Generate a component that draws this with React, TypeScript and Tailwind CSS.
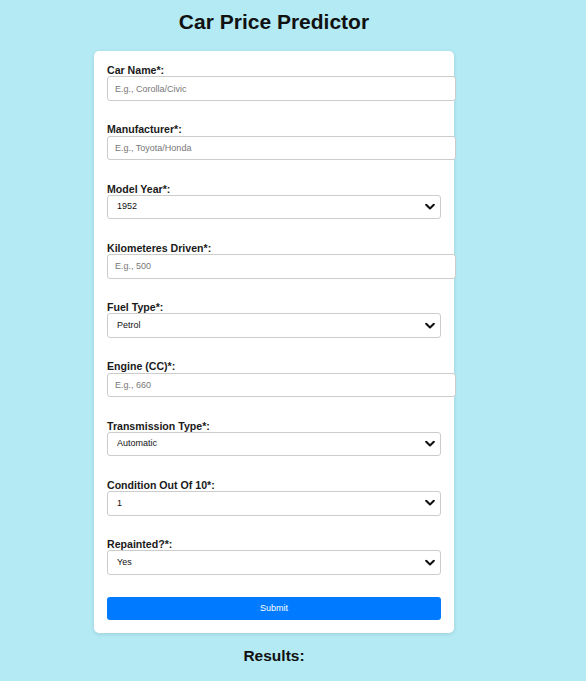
import React from "react";

const font = { fontFamily: '"Liberation Sans", Arial, sans-serif' };

function Chevron() {
  return (
    <svg
      className="pointer-events-none absolute right-[6px] top-1/2 -translate-y-1/2"
      width="10"
      height="7"
      viewBox="0 0 10 7"
      fill="none"
    >
      <polyline points="1.2,1.3 5,5 8.8,1.3" stroke="#111" strokeWidth="2.1" strokeLinecap="round" strokeLinejoin="round" />
    </svg>
  );
}

function TextField({ label, placeholder }: { label: string; placeholder: string }) {
  return (
    <div className="mb-[22.5px]">
      <label className="block text-[10.6px] leading-[12.25px] font-bold text-[#1a1a1a]">{label}</label>
      <input
        type="text"
        placeholder={placeholder}
        className="block w-[349px] h-[24.5px] border border-[#cccccc] rounded-[3px] bg-white pl-[7px] text-[9px] text-[#222] placeholder:text-[#777] outline-none"
      />
    </div>
  );
}

function SelectField({ label, options }: { label: string; options: string[] }) {
  return (
    <div className="mb-[22.5px]">
      <label className="block text-[10.6px] leading-[12.25px] font-bold text-[#1a1a1a]">{label}</label>
      <div className="relative w-full">
        <select className="block w-full h-[24.5px] appearance-none border border-[#cccccc] rounded-[3px] bg-white pl-[9px] text-[9px] text-[#111] outline-none">
          {options.map((o) => (
            <option key={o}>{o}</option>
          ))}
        </select>
        <Chevron />
      </div>
    </div>
  );
}

export default function App() {
  return (
    <div className="min-h-[681px] w-full bg-[#b3eaf4] overflow-hidden" style={font}>
      <div className="ml-[94px] w-[360px] pt-[10px]">
        <h1 className="text-center text-[21px] leading-[24px] font-bold text-[#111]">Car Price Predictor</h1>
        <div className="mt-[17px] bg-white rounded-[5px] shadow-[0_1px_4px_rgba(0,0,0,0.12)] p-[13px]">
          <TextField label="Car Name*:" placeholder="E.g., Corolla/Civic" />
          <TextField label="Manufacturer*:" placeholder="E.g., Toyota/Honda" />
          <SelectField label="Model Year*:" options={["1952"]} />
          <TextField label="Kilometeres Driven*:" placeholder="E.g., 500" />
          <SelectField label="Fuel Type*:" options={["Petrol"]} />
          <TextField label="Engine (CC)*:" placeholder="E.g., 660" />
          <SelectField label="Transmission Type*:" options={["Automatic"]} />
          <SelectField label="Condition Out Of 10*:" options={["1"]} />
          <SelectField label="Repainted?*:" options={["Yes"]} />
          <button
            type="button"
            className="block w-full h-[22.5px] bg-[#007bff] text-white text-[9px] rounded-[3px]"
          >
            Submit
          </button>
        </div>
        <h2 className="mt-[14.5px] text-center text-[15.5px] leading-[18px] font-bold text-[#111]">Results:</h2>
      </div>
    </div>
  );
}
